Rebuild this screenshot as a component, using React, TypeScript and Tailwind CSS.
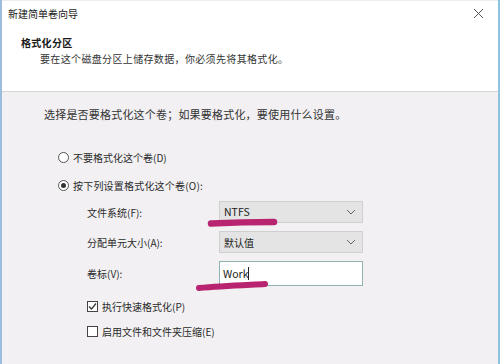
import React from "react";

function Chevron() {
  return (
    <svg width="10" height="6" viewBox="0 0 10 6" className="mr-[6px]">
      <path d="M1 1 L5 5 L9 1" fill="none" stroke="#666" strokeWidth="1" />
    </svg>
  );
}

export default function App() {
  const font = { fontFamily: '"Microsoft YaHei", "Noto Sans CJK SC", "Noto Sans", sans-serif' };
  return (
    <div
      className="relative w-[500px] h-[364px] overflow-hidden bg-[#f2f0f2] border-l-[2px] border-r-[2px] border-l-[#9cbddd] border-r-[#8ec3e0] text-[10px] text-[#2a2a2a]"
      style={font}
    >
      {/* header */}
      <div className="h-[92px] bg-white border-b border-[#d6d6d6] border-t border-t-[#e9eef2]">
        <div className="flex items-center justify-between h-[25px] pl-[6px] pr-[14px]">
          <span className="text-[10px] text-[#222]">新建简单卷向导</span>
          <svg width="11" height="11" viewBox="0 0 11 11">
            <path d="M1 1 L10 10 M10 1 L1 10" stroke="#555" strokeWidth="1" />
          </svg>
        </div>
        <div className="pl-[19px] pt-[9px] font-bold text-[10px] text-[#1a1a1a] leading-[16px] tracking-[0.3px]">格式化分区</div>
        <div className="pl-[38px] leading-[16px] text-[#333] tracking-[0.35px]">要在这个磁盘分区上储存数据，你必须先将其格式化。</div>
      </div>

      {/* body */}
      <div className="pl-[42px] pt-[14px]">
        <div className="leading-[16px] text-[#333] text-[11px] tracking-[0.2px]">选择是否要格式化这个卷；如果要格式化，要使用什么设置。</div>

        <div className="pl-[14px] mt-[27px] flex items-center gap-[4px] h-[16px]">
          <span className="w-[11px] h-[11px] rounded-full border border-[#555] bg-white"></span>
          <span>不要格式化这个卷(D)</span>
        </div>
        <div className="pl-[14px] mt-[12px] flex items-center gap-[4px] h-[16px]">
          <span className="w-[11px] h-[11px] rounded-full border border-[#555] bg-white flex items-center justify-center">
            <span className="w-[5px] h-[5px] rounded-full bg-[#333]"></span>
          </span>
          <span className="tracking-[0.2px]">按下列设置格式化这个卷(O):</span>
        </div>

        <div className="pl-[43px] mt-[8px] flex flex-col gap-[8px]">
          <div className="flex items-center h-[22px]">
            <span className="w-[132px]">文件系统(F):</span>
            <div className="w-[144px] h-[22px] bg-[#e4e4e4] border border-[#cfcfcf] flex items-center justify-between pl-[4px]">
              <span className="text-[#222] text-[10.5px]">NTFS</span>
              <Chevron />
            </div>
          </div>
          <div className="flex items-center h-[22px]">
            <span className="w-[132px]">分配单元大小(A):</span>
            <div className="w-[144px] h-[22px] bg-[#e4e4e4] border border-[#cfcfcf] flex items-center justify-between pl-[4px]">
              <span className="text-[#222]">默认值</span>
              <Chevron />
            </div>
          </div>
          <div className="flex items-center h-[25px]">
            <span className="w-[132px]">卷标(V):</span>
            <div className="w-[144px] h-[25px] bg-white border border-[#8fb3b5] flex items-center pl-[3px]">
              <span className="text-[#222] text-[10.5px]">Work</span>
              <span className="w-px h-[13px] bg-[#222]"></span>
            </div>
          </div>
        </div>

        <div className="pl-[43px] mt-[12px] flex items-center gap-[4px] h-[16px]">
          <span className="w-[11px] h-[11px] border border-[#444] bg-white flex items-center justify-center">
            <svg width="9" height="9" viewBox="0 0 9 9">
              <path d="M1 4.5 L3.5 7 L8 1.5" fill="none" stroke="#333" strokeWidth="1.2" />
            </svg>
          </span>
          <span>执行快速格式化(P)</span>
        </div>
        <div className="pl-[43px] mt-[9px] flex items-center gap-[4px] h-[16px]">
          <span className="w-[11px] h-[11px] border border-[#444] bg-white"></span>
          <span>启用文件和文件夹压缩(E)</span>
        </div>
      </div>

      {/* marker annotations */}
      <svg className="absolute left-0 top-0 pointer-events-none" width="500" height="364">
        <path d="M209 223.5 C 230 222.5, 255 222, 272 222" stroke="#b8246f" strokeWidth="6.5" strokeLinecap="round" fill="none" />
        <path d="M197 288 C 220 286, 245 285, 263 284" stroke="#b8246f" strokeWidth="6" strokeLinecap="round" fill="none" />
      </svg>
    </div>
  );
}
